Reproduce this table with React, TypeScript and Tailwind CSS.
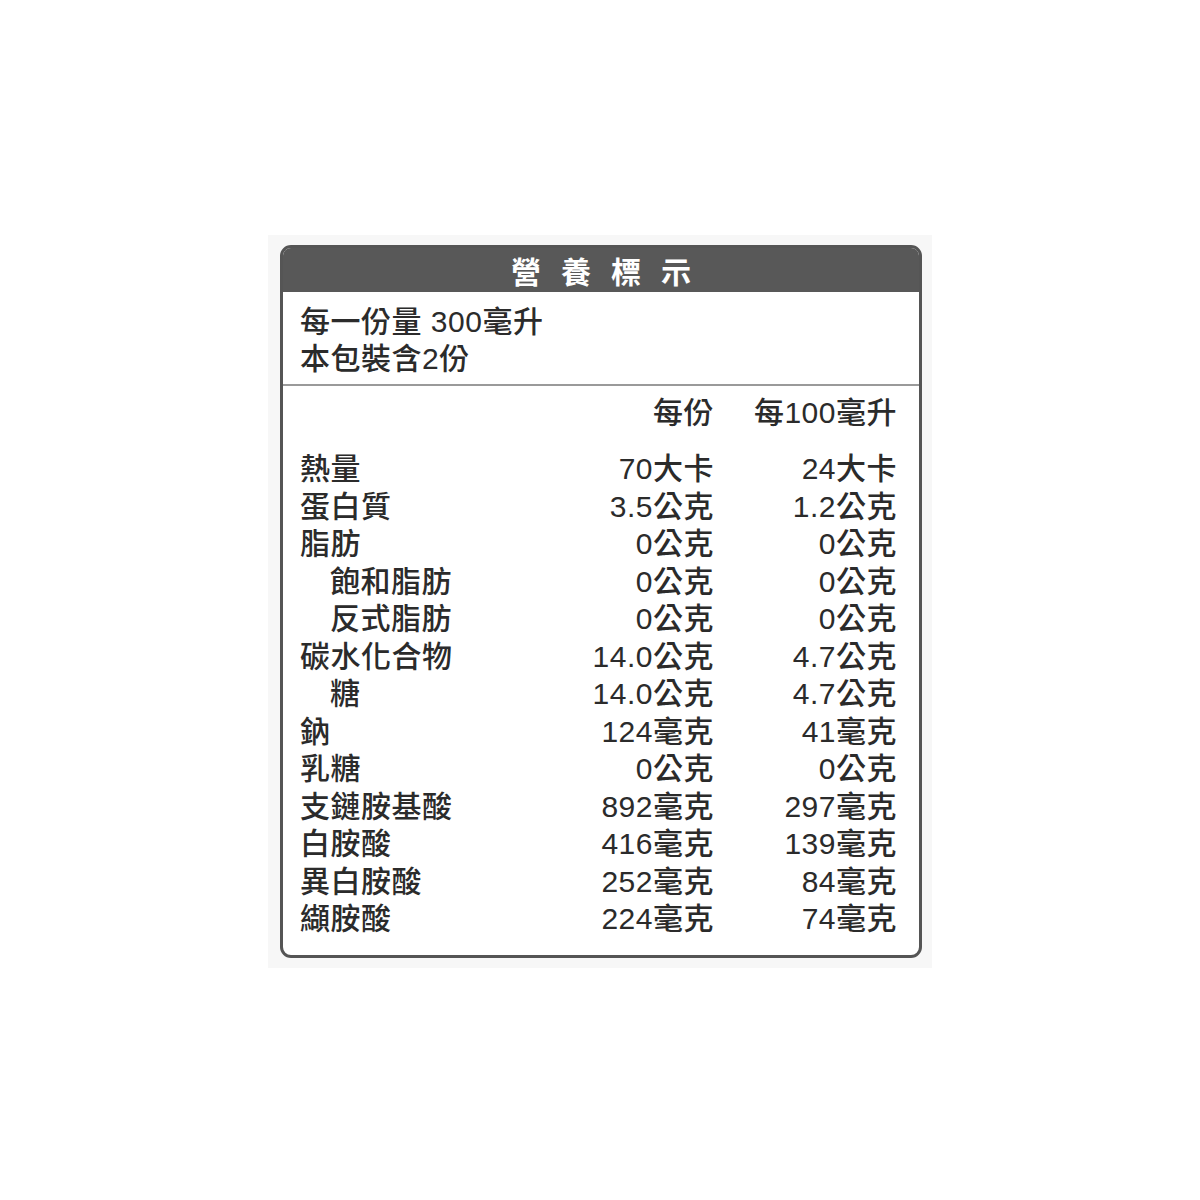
import React from "react";

const rows: { label: string; a: string; b: string; indent?: boolean }[] = [
  { label: "熱量", a: "70大卡", b: "24大卡" },
  { label: "蛋白質", a: "3.5公克", b: "1.2公克" },
  { label: "脂肪", a: "0公克", b: "0公克" },
  { label: "飽和脂肪", a: "0公克", b: "0公克", indent: true },
  { label: "反式脂肪", a: "0公克", b: "0公克", indent: true },
  { label: "碳水化合物", a: "14.0公克", b: "4.7公克" },
  { label: "糖", a: "14.0公克", b: "4.7公克", indent: true },
  { label: "鈉", a: "124毫克", b: "41毫克" },
  { label: "乳糖", a: "0公克", b: "0公克" },
  { label: "支鏈胺基酸", a: "892毫克", b: "297毫克" },
  { label: "白胺酸", a: "416毫克", b: "139毫克" },
  { label: "異白胺酸", a: "252毫克", b: "84毫克" },
  { label: "纈胺酸", a: "224毫克", b: "74毫克" },
];

export default function App() {
  return (
    <div
      className="w-full h-[1200px] bg-white pt-[235px] pl-[268px]"
      style={{ fontFamily: '"Liberation Sans", "Noto Sans CJK TC", "Noto Sans CJK SC", sans-serif' }}
    >
      <div className="w-[664px] h-[733px] bg-[#f7f7f7] pt-[10px] pl-[12px]">
        <div className="w-[642px] h-[713px] border-[3px] border-[#555555] rounded-[11px] bg-white overflow-hidden flex flex-col">
          <div className="h-[44px] bg-[#585858] flex items-center justify-center text-white font-bold text-[30px] leading-none tracking-[20px] pl-[20px] pt-[5px]">
            營養標示
          </div>
          <div className="px-[17px] pt-[11px] pb-[7px] text-[#2b2b2b] text-[30px] tracking-[0.5px] leading-[37px] font-medium">
            <div>每一份量 300毫升</div>
            <div>本包裝含2份</div>
          </div>
          <div className="h-[2px] bg-[#9a9a9a]" />
          <div className="pl-[17px] pr-[22px] pt-[8px] text-[#2b2b2b] text-[30px] tracking-[0.5px] font-medium">
            <div className="flex leading-[37px] mb-[19px]">
              <div className="flex-1" />
              <div className="w-[200px] text-right">每份</div>
              <div className="w-[183px] text-right">每100毫升</div>
            </div>
            {rows.map((r) => (
              <div key={r.label} className="flex leading-[37.5px]">
                <div className={r.indent ? "flex-1 pl-[30px]" : "flex-1"}>{r.label}</div>
                <div className="w-[200px] text-right">{r.a}</div>
                <div className="w-[183px] text-right">{r.b}</div>
              </div>
            ))}
          </div>
        </div>
      </div>
    </div>
  );
}
